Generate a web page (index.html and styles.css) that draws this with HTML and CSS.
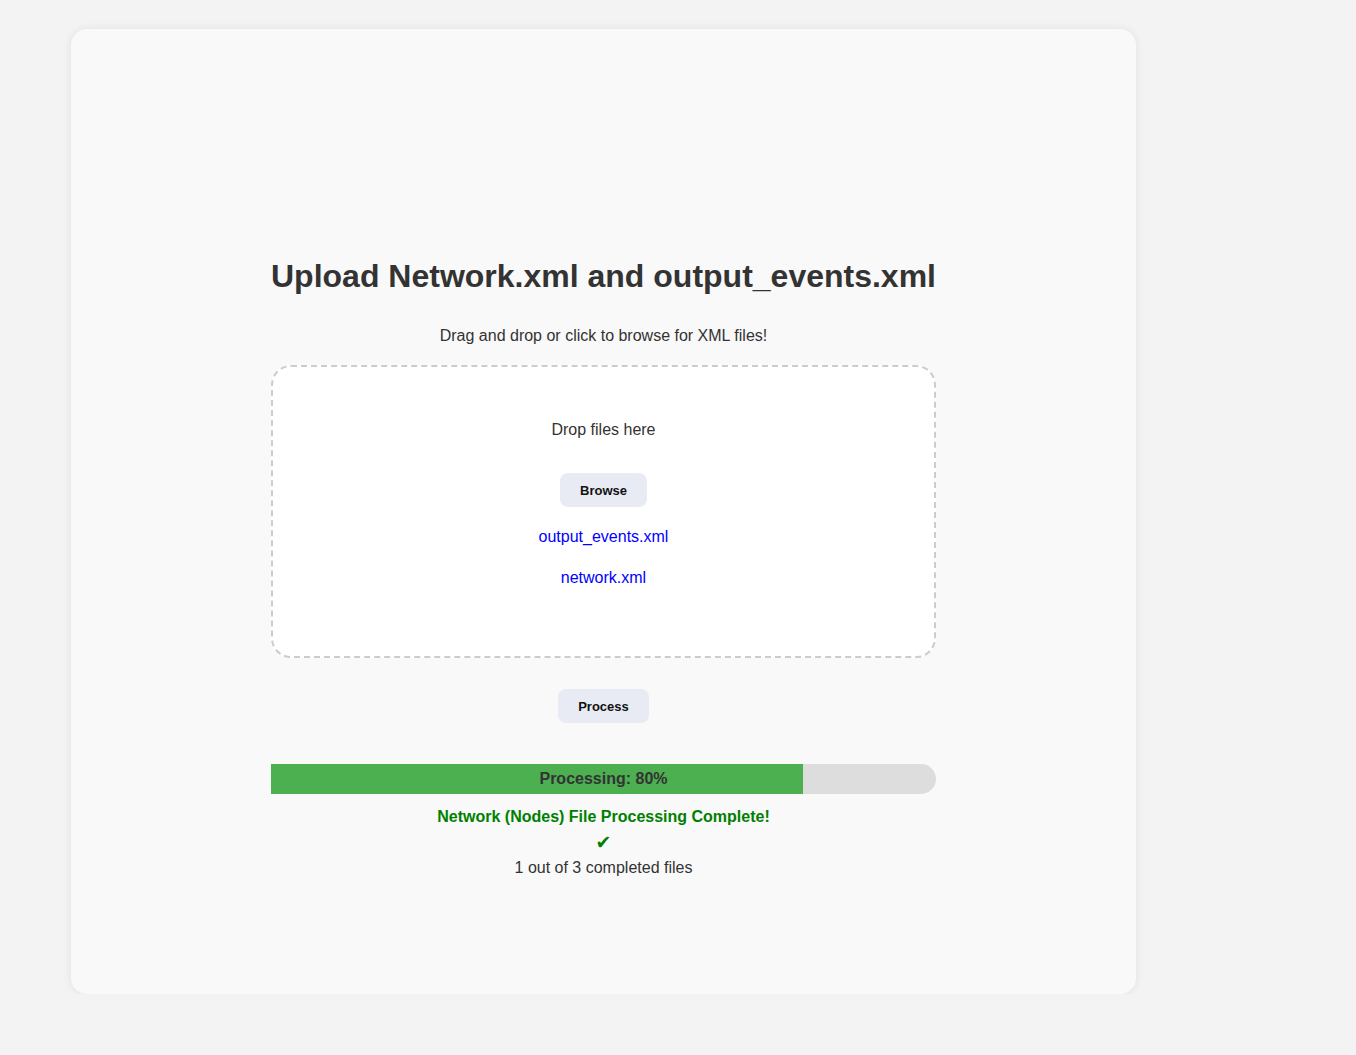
FILE: index.html
```html
<!DOCTYPE html>
<html>
<head>
<meta charset="utf-8">
<link rel="stylesheet" href="styles.css">
</head>
<body>
<div class="card">
  <div class="content">
    <h1 class="title">Upload Network.xml and output_events.xml</h1>
    <p class="subtitle">Drag and drop or click to browse for XML files!</p>
    <div class="dropzone">
      <p class="drop-text">Drop files here</p>
      <button class="btn btn-browse">Browse</button>
      <a class="file-link first">output_events.xml</a>
      <a class="file-link second">network.xml</a>
    </div>
    <button class="btn btn-process">Process</button>
    <div class="progress">
      <div class="progress-fill" style="width: 80%"></div>
      <span class="progress-label">Processing: 80%</span>
    </div>
    <p class="status">Network (Nodes) File Processing Complete!</p>
    <p class="check">✔</p>
    <p class="count">1 out of 3 completed files</p>
  </div>
</div>
</body>
</html>
```
FILE: styles.css
```css
html, body {
  margin: 0;
  padding: 0;
  background: #f3f3f3;
  font-family: "Liberation Sans", Arial, sans-serif;
  color: #333;
}
body {
  padding: 29px 0 0 71px;
}
.card {
  width: 1065px;
  height: 965px;
  box-sizing: border-box;
  background: #f9f9f9;
  border-radius: 16px;
  box-shadow: 0 0 10px rgba(0,0,0,0.08);
  display: flex;
  flex-direction: column;
  align-items: center;
  padding-top: 229px;
}
.content {
  width: 665px;
  display: flex;
  flex-direction: column;
  align-items: center;
  text-align: center;
}
.title {
  margin: 0;
  font-size: 32px;
  line-height: 37px;
  font-weight: bold;
  color: #333;
  white-space: nowrap;
}
.subtitle {
  margin: 32px 0 0;
  font-size: 16px;
  line-height: 18px;
}
.dropzone {
  margin-top: 20px;
  width: 100%;
  height: 293px;
  box-sizing: border-box;
  border: 2px dashed #ccc;
  border-radius: 20px;
  background: #fff;
  display: flex;
  flex-direction: column;
  align-items: center;
  padding-top: 54px;
}
.drop-text {
  margin: 0;
  font-size: 16px;
  line-height: 18px;
}
.btn {
  border: none;
  background: #e8ebf3;
  border-radius: 8px;
  height: 34px;
  padding: 0 20px;
  font-family: "Liberation Sans", Arial, sans-serif;
  font-size: 13px;
  font-weight: bold;
  color: #111;
}
.btn-browse {
  margin-top: 34px;
}
.file-link {
  color: #0000ff;
  font-size: 16px;
  line-height: 18px;
  text-decoration: none;
}
.file-link.first {
  margin-top: 21px;
}
.file-link.second {
  margin-top: 23px;
}
.btn-process {
  margin-top: 31px;
}
.progress {
  position: relative;
  margin-top: 41px;
  width: 100%;
  height: 30px;
  background: #ddd;
  border-radius: 15px;
}
.progress-fill {
  height: 100%;
  background: #4caf50;
}
.progress-label {
  position: absolute;
  left: 0;
  right: 0;
  top: 0;
  line-height: 30px;
  font-size: 16px;
  font-weight: bold;
  color: #333;
}
.status {
  margin: 14px 0 0;
  font-size: 16px;
  line-height: 18px;
  font-weight: bold;
  color: #008000;
}
.check {
  margin: 7px 0 0;
  font-size: 19px;
  line-height: 18px;
  color: #008000;
  font-family: "DejaVu Sans", sans-serif;
}
.count {
  margin: 8px 0 0;
  font-size: 16px;
  line-height: 18px;
}
```
